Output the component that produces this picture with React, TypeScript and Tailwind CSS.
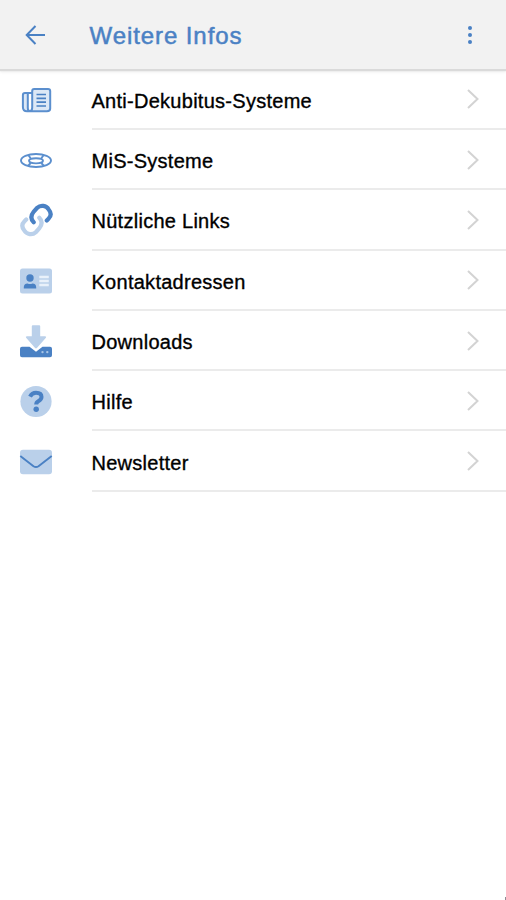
import React from 'react';

interface MenuItem {
    label: string;
    icon: React.ReactNode;
}

const DARK = '#4a81c4';
const LIGHT = '#bad0ea';

const items: MenuItem[] = [
    {
        label: 'Anti-Dekubitus-Systeme',
        icon: (
            <g fill="none" stroke="#5b8fce" strokeWidth="2" strokeLinejoin="round">
                <path fill="#dce8f6" d="M12.500 10H6Q3.900 10 3.900 12v12Q3.900 28.300 8 28.300H28Q31.200 28.300 31.200 25.500V8Q31.200 5.900 29 5.900H15.200Q13.200 5.900 13.200 8V24.500Q13.200 28 10.800 28Q8.800 28 8.800 25V10" />
                <path stroke={DARK} strokeWidth="1.700" d="M17.500 11.500h9.500M17.500 15.300h9.500M17.500 19.200h9.500M17.500 23h9.500" />
            </g>
        ),
    },
    {
        label: 'MiS-Systeme',
        icon: (
            <g fill="none" stroke="#5b8fce" strokeWidth="1.900">
                <ellipse cx="17" cy="17.500" rx="15" ry="6.500" />
                <ellipse cx="17" cy="17.800" rx="7" ry="2.600" />
                <path d="M9.300 12l2.700 3.800M24.700 12l-2.700 3.800M9 23l2.800-3.200M25 23l-2.800-3.200" />
            </g>
        ),
    },
    {
        label: 'Nützliche Links',
        icon: (
            <g fill="none" strokeWidth="4.200" strokeLinecap="round">
                <path stroke={LIGHT} d="M20.300 14.800Q25 19.500 20.200 25.500L16.800 29.200A7.500 7.500 0 0 1 5.300 27.500Q1.200 22.500 5.500 18.300L7.200 16.600" />
                <path stroke={DARK} d="M14.700 19.200Q10 14.500 14.800 8.500L18.200 4.800A7.500 7.500 0 0 1 29.700 6.500Q33.800 11.500 29.500 15.700L27.800 17.400" />
            </g>
        ),
    },
    {
        label: 'Kontaktadressen',
        icon: (
            <>
                <rect x="1" y="4.500" width="32" height="25" rx="2.500" fill={LIGHT} />
                <circle cx="11" cy="14" r="3.700" fill={DARK} />
                <path fill={DARK} d="M4.800 24.500v-1.300q0-3.800 3.800-3.800q2.400 1 4.800 0q3.800 0 3.800 3.800v1.300z" />
                <path stroke="#e9f1fa" strokeWidth="2.400" d="M20.300 13h9.500M20.300 17h9.500M20.300 21h9.500" />
            </>
        ),
    },
    {
        label: 'Downloads',
        icon: (
            <g transform="translate(0 .8)">
                <path fill={DARK} d="M3 22h7.500l6.500 5l6.500-5H31q2 0 2 2v6.500q0 2-2 2H3q-2 0-2-2V24q0-2 2-2z" />
                <path fill={LIGHT} d="M12.800 1.500q0-1 1-1h6.400q1 0 1 1V11.500H26q1.900 0 .9 1.500L17.900 23.200q-.9.900-1.800 0L7.100 13Q6.100 11.500 8 11.500h4.800z" />
                <circle cx="23.500" cy="27.300" r="1.200" fill="#a9c5e6" />
                <circle cx="28.300" cy="27.300" r="1.200" fill="#a9c5e6" />
            </g>
        ),
    },
    {
        label: 'Hilfe',
        icon: (
            <>
                <circle cx="17" cy="17.500" r="15.600" fill={LIGHT} />
                <path fill="none" stroke={DARK} strokeWidth="4" d="M11 12.600q2-3.800 6-3.800q5.500 0 5.500 4.200q0 2.500-3.200 4.200q-2.100 1.100-2.100 3.300" />
                <circle cx="17.200" cy="25.300" r="2.700" fill={DARK} />
            </>
        ),
    },
    {
        label: 'Newsletter',
        icon: (
            <>
                <rect x="1" y="4.800" width="32" height="24.500" rx="3" fill={LIGHT} />
                <path fill="none" stroke={DARK} strokeWidth="1.900" strokeLinejoin="round" d="M1.300 11L14.500 21.200Q17 22.900 19.500 21.200L32.700 11" />
            </>
        ),
    },
];

function Header() {
    return (
        <header className="relative flex h-[69px] items-center bg-[#f2f2f2] pt-[2px] shadow-[0_2px_1px_0_#dadada,0_3px_3px_0_rgba(0,0,0,0.08)]">
            <svg className="mb-px ml-[25px] h-[22px] w-[21px]" viewBox="0 0 21 22" fill="none" stroke={DARK} strokeWidth="2">
                <path d="M20 11H2M10.500 2L1.700 11l8.800 9" />
            </svg>
            <h1 className="ml-[43.500px] pt-px text-[24px] font-normal tracking-[0.92px] whitespace-nowrap text-[#4a81c4] [-webkit-text-stroke:0.5px_#4a81c4]">
                Weitere Infos
            </h1>
            <div className="mr-[34px] mb-[2px] ml-auto flex flex-col gap-[3px]">
                <span className="size-1 rounded-full bg-[#4a81c4]" />
                <span className="size-1 rounded-full bg-[#4a81c4]" />
                <span className="size-1 rounded-full bg-[#4a81c4]" />
            </div>
        </header>
    );
}

function MenuRow({ label, icon }: MenuItem) {
    return (
        <li className="flex h-[60.3px] items-center pl-[19px]">
            <svg className="h-[34px] w-[34px] shrink-0" viewBox="0 0 34 34">
                {icon}
            </svg>
            <div className="ml-[38.500px] flex h-full flex-1 items-center justify-between border-b-2 border-[#ebebeb] pt-1 pr-[27px]">
                <span className="text-[20px] tracking-[0.270px] whitespace-nowrap text-black [-webkit-text-stroke:0.35px_#000]">
                    {label}
                </span>
                <svg className="mb-[3px] h-5 w-3" viewBox="0 0 12 20" fill="none" stroke="#d3d3d3" strokeWidth="2">
                    <path d="M1 1l9.500 9L1 19" />
                </svg>
            </div>
        </li>
    );
}

export default function App() {
    return (
        <div className="relative h-[900px] w-[506px] overflow-hidden bg-white font-['Liberation_Sans',Arial,sans-serif]">
            <Header />
            <ul className="mt-[0.700px]">
                {items.map((item) => (
                    <MenuRow key={item.label} {...item} />
                ))}
            </ul>
            <span className="absolute right-0 bottom-0 h-[3px] w-px bg-[#8f8b94]" />
        </div>
    );
}
